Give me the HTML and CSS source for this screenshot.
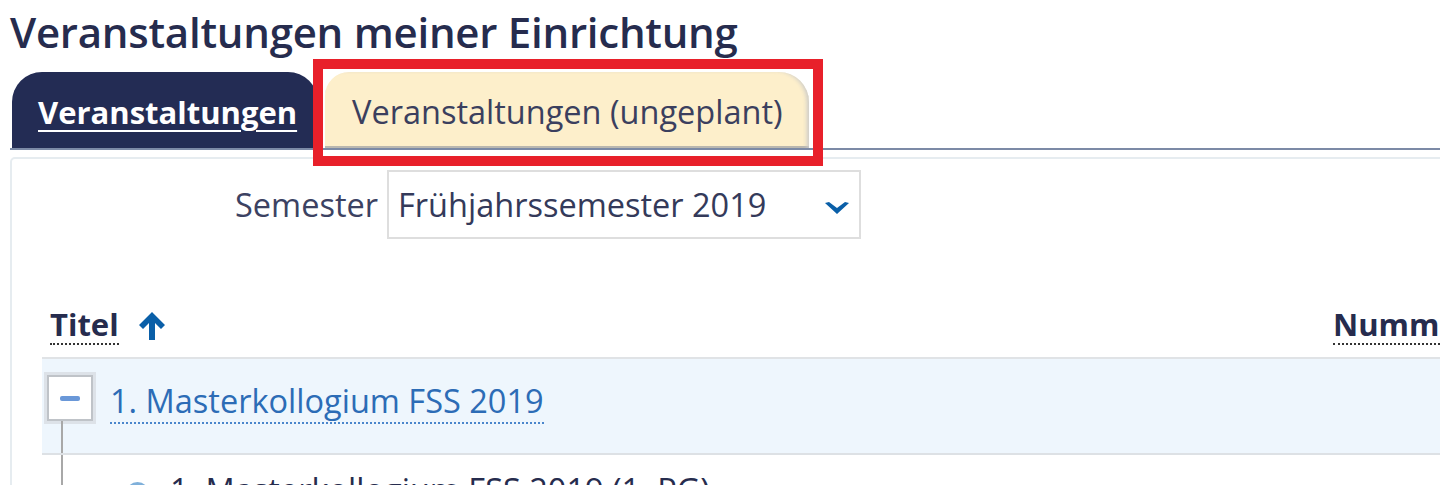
FILE: index.html
```html
<!DOCTYPE html>
<html lang="de">
<head>
<meta charset="utf-8">
<title>Veranstaltungen meiner Einrichtung</title>
<link rel="stylesheet" href="styles.css">
</head>
<body>
<div class="page">
  <h1 class="title">Veranstaltungen meiner Einrichtung</h1>
  <div class="tabs">
    <a class="tab tab-active" href="#">Veranstaltungen</a>
    <div class="tab tab-plain">Veranstaltungen (ungeplant)<span class="highlight"></span></div>
  </div>
  <div class="panel">
    <div class="filter">
      <span class="filter-label">Semester</span>
      <div class="select">
        <span class="select-value">Frühjahrssemester 2019</span>
        <svg class="chevron" width="24" height="12" viewBox="0 0 24 12"><path d="M0 1 L4 0 L12 6 L20 0 L24 1 L12 12 Z" fill="#0a5fa8"/></svg>
      </div>
    </div>
    <div class="table">
      <div class="thead">
        <div class="th th-title"><span class="th-label">Titel</span>
          <svg class="sort" width="32" height="32" viewBox="0 0 32 32"><path d="M16 2 L29 15 L25 19 L19 13 L19 30 L13 30 L13 13 L7 19 L3 15 Z" fill="#0a5fa8"/></svg>
        </div>
        <div class="th th-num"><span class="th-label">Nummer</span></div>
      </div>
      <div class="row row-parent">
        <div class="tree-cell">
          <span class="toggle"><span class="minus"></span></span>
          <span class="tree-line"></span>
        </div>
        <a class="row-link" href="#">1. Masterkollogium FSS 2019</a>
      </div>
      <div class="row row-child">
        <div class="tree-cell"><span class="tree-line"></span></div>
        <span class="dot"></span>
        <span class="row-text">1. Masterkollogium FSS 2019 (1. PG)</span>
      </div>
    </div>
  </div>
</div>
</body>
</html>
```
FILE: styles.css
```css
html, body {
  margin: 0;
  padding: 0;
  background: #ffffff;
  overflow: hidden;
}
body {
  font-family: "Open Sans", "Noto Sans", sans-serif;
  color: #3b4060;
  width: 1440px;
  height: 485px;
}
.page {
  padding-left: 10px;
}
.title {
  margin: 2px 0 0 0;
  font-size: 42px;
  font-weight: 600;
  line-height: 60px;
  color: #262c4e;
  letter-spacing: -0.25px;
}
.tabs {
  display: flex;
  align-items: flex-end;
  height: 88px;
  border-bottom: 2px solid #7c8aa6;
  box-sizing: border-box;
  padding-left: 2px;
  gap: 7px;
}
.tab {
  display: flex;
  align-items: center;
  box-sizing: border-box;
  text-decoration: none;
}
.tab-active {
  height: 76px;
  width: 306px;
  padding-left: 26px;
  padding-top: 4px;
  background: #232c54;
  color: #ffffff;
  font-size: 31px;
  font-weight: 700;
  border-radius: 30px 30px 0 0;
  text-decoration: underline;
  text-decoration-thickness: 2px;
  text-underline-offset: 6px;
}
.tab-plain {
  position: relative;
  height: 76px;
  width: 484px;
  padding-left: 27px;
  padding-top: 2px;
  background: #fdefcb;
  color: #3b3f5e;
  font-size: 32.5px;
  border-radius: 24px 30px 0 0;
  box-shadow: inset -4px 0 4px -2px #c9c9c9, inset 0 -2px 0 #b9b6ad;
}
.highlight {
  position: absolute;
  left: -12px;
  top: -13px;
  right: -14px;
  bottom: -18px;
  border: 10px solid #e8202a;
  pointer-events: none;
}
.panel {
  margin-top: 7px;
  width: 1500px;
  border: 2px solid #e6ecf0;
  border-radius: 5px;
  padding: 11px 0 0 30px;
  box-sizing: border-box;
  height: 340px;
}
.filter {
  display: flex;
  align-items: center;
  gap: 9px;
  padding-left: 193px;
}
.filter-label {
  font-size: 32.5px;
  color: #3c4262;
}
.select {
  width: 474px;
  height: 69px;
  box-sizing: border-box;
  border: 2px solid #dedede;
  display: flex;
  align-items: center;
  justify-content: space-between;
  padding: 0 10px 0 9px;
  font-size: 32.5px;
  color: #343a5a;
}
.chevron {
  display: block;
  margin-top: 6px;
}
.table {
  margin-top: 50px;
}
.thead {
  display: grid;
  grid-template-columns: 1283px auto;
  height: 70px;
  align-items: end;
  padding-bottom: 12px;
  border-bottom: 2px solid #e0e3e6;
  box-sizing: border-box;
}
.th {
  display: flex;
  align-items: center;
  gap: 17px;
  padding-left: 8px;
  font-size: 31px;
  font-weight: 700;
  color: #262c4e;
}
.th-label {
  border-bottom: 2px dotted #333;
  line-height: 38px;
}
.sort {
  display: block;
  margin-top: 2px;
}
.row {
  display: flex;
  align-items: stretch;
}
.row-parent {
  background: #eef6fd;
  height: 96px;
  border-bottom: 2px solid #dde1e5;
  box-sizing: border-box;
}
.tree-cell {
  width: 68px;
  display: flex;
  flex-direction: column;
  align-items: flex-start;
  padding-left: 5px;
  box-sizing: border-box;
}
.row-parent .tree-cell {
  padding-top: 16px;
}
.toggle {
  width: 46px;
  height: 46px;
  box-sizing: border-box;
  background: #ffffff;
  border: 2px solid #bfc3c8;
  box-shadow: 0 0 0 3px #dde2e8;
  display: flex;
  align-items: center;
  justify-content: center;
}
.minus {
  width: 20px;
  height: 5px;
  border-radius: 2px;
  background: #6a98d8;
}
.tree-line {
  flex: 1;
  width: 2px;
  background: #a8a8a8;
  margin-left: 14px;
}
.row-link {
  font-size: 32.5px;
  color: #2c6cb6;
  text-decoration: none;
  border-bottom: 2px dotted #4a86cc;
  align-self: flex-start;
  margin-top: 21px;
  line-height: 42px;
}
.row-child {
  height: 80px;
}
.row-child .tree-cell {
  padding-left: 19px;
}
.row-child .tree-line {
  margin-left: 0;
}
.dot {
  width: 23px;
  height: 23px;
  border-radius: 50%;
  background: #7fb0da;
  margin: 27px 0 0 16px;
}
.row-text {
  font-size: 32.5px;
  color: #262c4e;
  margin: 14px 0 0 21px;
  line-height: 42px;
}
```
